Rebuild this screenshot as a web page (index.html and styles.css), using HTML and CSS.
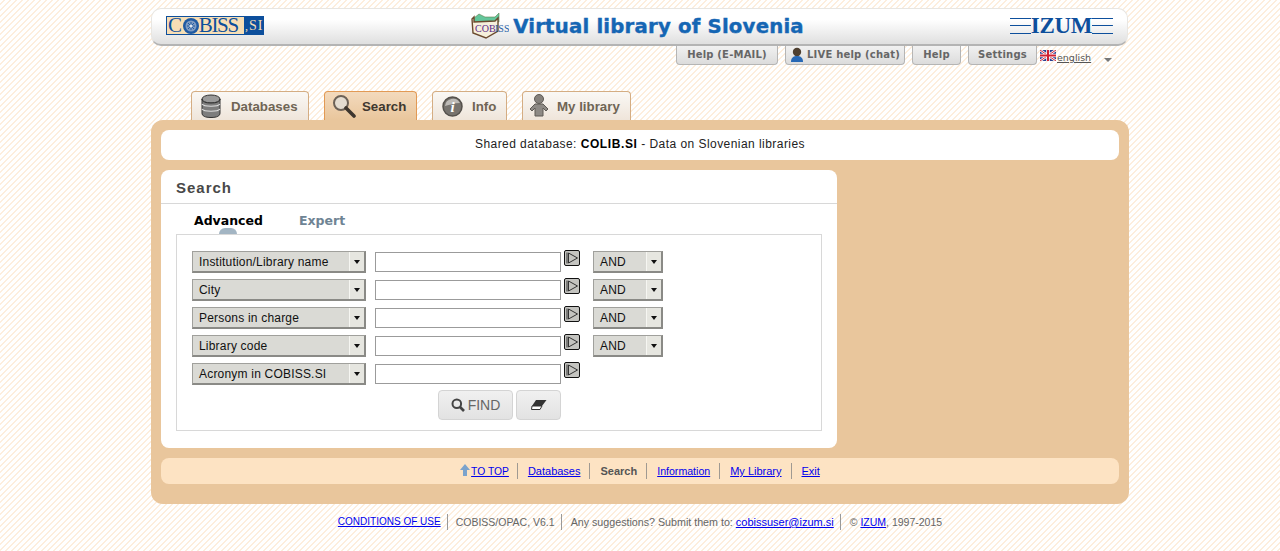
FILE: index.html
```html
<!DOCTYPE html>
<html lang="en">
<head>
<meta charset="utf-8">
<title>COBISS+</title>
<link rel="stylesheet" href="styles.css">
</head>
<body>
<div class="page">
  <header class="header">
    <div class="cobiss-logo"><span class="cl-main">C<svg class="cl-seal" viewBox="0 0 16 16"><circle cx="8" cy="8" r="8" fill="#1f5aa3"/><circle cx="8" cy="8" r="5.500" fill="#7f9bc2"/><path d="M4 8H12M8 4V12M5 5 11 11M11 5 5 11" stroke="#1f5aa3"/><circle cx="8" cy="8" r="1.600" fill="#dfe6ef"/></svg>BISS</span><span class="cl-si"><span class="cl-dot">,</span>SI</span></div>
    <div class="title">
      <svg class="book" width="38" height="26" viewBox="0 0 38 26"><path d="M3 5 8 1 14 4 24 4 28 0V9H3Z" fill="#63c69b" stroke="#5e7f4f" stroke-width=".6"/><path d="M1 6 3 4V9L24 8 27 5V18L15 25 2 20Z" fill="#f6f0dc" stroke="#6b4a2e" stroke-width="1.400"/><text x="4" y="19" class="book-t">COB</text><text x="24" y="19" class="book-s">ISS</text></svg>
      <span class="title-text">Virtual library of Slovenia</span>
    </div>
    <div class="izum"><span class="izum-lines"></span><span class="izum-name">IZUM</span><span class="izum-lines"></span></div>
  </header>

  <nav class="helpbar">
    <a class="hbtn hb1">Help (E-MAIL)</a>
    <a class="hbtn hb2"><svg width="14" height="15" viewBox="0 0 14 15"><circle cx="7" cy="5" r="4.200" fill="#4e3f30"/><path d="M1 15C1 10 4 9 7 9S13 10 13 15Z" fill="#2768b5"/></svg>LIVE help (chat)</a>
    <a class="hbtn hb3">Help</a>
    <a class="hbtn hb4">Settings</a>
    <svg class="flag" width="16" height="11" viewBox="0 0 16 11"><rect width="16" height="11" fill="#2a3f8f"/><path d="M0 0 16 11M16 0 0 11" stroke="#fff" stroke-width="2.400"/><path d="M0 0 16 11M16 0 0 11" stroke="#cf2233" stroke-width="1"/><path d="M8 0V11M0 5.500H16" stroke="#fff" stroke-width="3.600"/><path d="M8 0V11M0 5.500H16" stroke="#cf2233" stroke-width="2"/></svg>
    <a class="lang">english</a>
    <span class="lang-arrow"></span>
  </nav>

  <nav class="tabs">
    <a class="tab t1"><svg width="20" height="24" viewBox="0 0 20 24"><ellipse cx="10" cy="5" rx="9" ry="4" fill="#9a9a9a" stroke="#333"/><path d="M1 5V19C1 22 4 23.500 10 23.500S19 22 19 19V5C19 8 15 9 10 9S1 8 1 5Z" fill="#7d7d7d" stroke="#333"/><path d="M1 10C3 13 17 13 19 10M1 15C3 18 17 18 19 15" fill="none" stroke="#ddd" stroke-width="1.200"/></svg><span>Databases</span></a>
    <a class="tab t2 active"><svg width="24" height="24" viewBox="0 0 24 24"><circle cx="9" cy="9" r="7" fill="#e4dcd0" stroke="#6d6257" stroke-width="2"/><path d="M14 14 22 22" stroke="#3e362e" stroke-width="3.600" stroke-linecap="round"/></svg><span>Search</span></a>
    <a class="tab t3"><svg width="21" height="21" viewBox="0 0 21 21"><circle cx="10.500" cy="10.500" r="9.500" fill="#77736e" stroke="#55514c" stroke-width="1.500"/><path d="M3 10A8 8 0 0 1 18 7C12 7 8 9 3 10Z" fill="#bdbab6"/><text x="10.500" y="16" class="info-i">i</text></svg><span>Info</span></a>
    <a class="tab t4"><svg width="22" height="24" viewBox="0 0 22 24"><circle cx="11" cy="5" r="4.500" fill="#85817c" stroke="#5e5a55"/><path d="M7 10H15L20 15 18 17 15 14V22H7V14L4 17 2 15Z" fill="#8e8a85" stroke="#5e5a55"/></svg><span>My library</span></a>
  </nav>

  <main class="main">
    <div class="shared">Shared database: <b>COLIB.SI</b> - Data on Slovenian libraries</div>

    <section class="panel">
      <h1 class="panel-title">Search</h1>
      <div class="subtabs">
        <a class="subtab current">Advanced</a>
        <a class="subtab">Expert</a>
      </div>
      <div class="formbox">
        <div class="row">
          <div class="sel sel-wide"><span>Institution/Library name</span><i class="sel-btn"></i></div>
          <div class="field"></div>
          <button class="go"><svg width="14" height="14" viewBox="0 0 14 14"><path d="M2 1.500V12.500M3.500 2 12.500 7 3.500 12Z" fill="none" stroke="#333"/></svg></button>
          <div class="sel sel-and"><span>AND</span><i class="sel-btn"></i></div>
        </div>
        <div class="row">
          <div class="sel sel-wide"><span>City</span><i class="sel-btn"></i></div>
          <div class="field"></div>
          <button class="go"><svg width="14" height="14" viewBox="0 0 14 14"><path d="M2 1.500V12.500M3.500 2 12.500 7 3.500 12Z" fill="none" stroke="#333"/></svg></button>
          <div class="sel sel-and"><span>AND</span><i class="sel-btn"></i></div>
        </div>
        <div class="row">
          <div class="sel sel-wide"><span>Persons in charge</span><i class="sel-btn"></i></div>
          <div class="field"></div>
          <button class="go"><svg width="14" height="14" viewBox="0 0 14 14"><path d="M2 1.500V12.500M3.500 2 12.500 7 3.500 12Z" fill="none" stroke="#333"/></svg></button>
          <div class="sel sel-and"><span>AND</span><i class="sel-btn"></i></div>
        </div>
        <div class="row">
          <div class="sel sel-wide"><span>Library code</span><i class="sel-btn"></i></div>
          <div class="field"></div>
          <button class="go"><svg width="14" height="14" viewBox="0 0 14 14"><path d="M2 1.500V12.500M3.500 2 12.500 7 3.500 12Z" fill="none" stroke="#333"/></svg></button>
          <div class="sel sel-and"><span>AND</span><i class="sel-btn"></i></div>
        </div>
        <div class="row">
          <div class="sel sel-wide"><span>Acronym in COBISS.SI</span><i class="sel-btn"></i></div>
          <div class="field"></div>
          <button class="go"><svg width="14" height="14" viewBox="0 0 14 14"><path d="M2 1.500V12.500M3.500 2 12.500 7 3.500 12Z" fill="none" stroke="#333"/></svg></button>
        </div>
        <div class="actions">
          <button class="act act-find"><svg width="14" height="14" viewBox="0 0 14 14"><circle cx="5.800" cy="5.800" r="4.300" fill="none" stroke="#444" stroke-width="2"/><path d="M9 9 13 13" stroke="#444" stroke-width="2.600"/></svg>FIND</button>
          <button class="act act-clear"><svg width="16" height="10" viewBox="0 0 16 10"><path d="M5 0H15.500L11 6H1Z" fill="#333"/><path d="M1 6H11L9 9.500H0.500Z" fill="#fff" stroke="#333"/></svg></button>
        </div>
      </div>
    </section>

    <nav class="footnav">
      <span class="fn fn-top"><svg width="10" height="12" viewBox="0 0 10 12"><path d="M5 0 10 6H7V12H3V6H0Z" fill="#7ba3cc"/></svg><a href="#">TO TOP</a></span>
      <span class="fn"><a href="#">Databases</a></span>
      <span class="fn"><b>Search</b></span>
      <span class="fn fn-info"><a href="#">Information</a></span>
      <span class="fn"><a href="#">My Library</a></span>
      <span class="fn fn-last"><a href="#">Exit</a></span>
    </nav>
  </main>

  <footer class="footer">
    <span class="ft ft-first"><a href="#">CONDITIONS OF USE</a></span>
    <span class="ft">COBISS/OPAC, V6.1</span>
    <span class="ft ft-mid">Any suggestions? Submit them to: <a href="#">cobissuser@izum.si</a></span>
    <span class="ft ft-last">© <a href="#">IZUM</a>, 1997-2015</span>
  </footer>
</div>
</body>
</html>
```
FILE: styles.css
```css
* { box-sizing: border-box; }
html, body { margin: 0; height: 100%; }
body {
  font-family: "Liberation Sans", Arial, sans-serif;
  font-size: 12px;
  color: #000;
  overflow: hidden;
  background: #fff linear-gradient(135deg, #fff 0, #fff 30%, #fdeedd 30%, #fdeedd 50%, #fff 50%, #fff 80%, #fdeedd 80%, #fdeedd 100%) 0 0 / 6px 6px;
}
.page { width: 978px; margin: 0 auto; padding-top: 8px; }

/* header */
.header {
  width: 977px; height: 38px; display: flex; align-items: center; justify-content: space-between;
  padding: 0 14px 2px 14px;
  border-radius: 10px; border: 1px solid #e8e6e2; border-bottom: 2px solid #b4b4b4;
  background: linear-gradient(#fff 0, #fff 30%, #dfdfdf 100%);
}
.cobiss-logo {
  width: 98px; height: 19px; display: flex; align-items: center; justify-content: space-between;
  background: #f7deb5; border: 1px solid #0d4f9c;
  font-family: "Liberation Serif", serif; color: #0d4f9c; font-size: 21px; line-height: 17px;
  white-space: nowrap;
}
.cl-main { display: flex; align-items: center; letter-spacing: -1.300px; padding-left: 1px; }
.cl-seal { width: 16px; height: 16px; margin: 0 0 0 2px; flex: none; }
.cl-si { background: #0d4f9c; color: #f7deb5; font-size: 14px; width: 19px; height: 17px; line-height: 17px; text-align: left; letter-spacing: 1px; white-space: nowrap; }
.cl-dot { padding: 0 1px 0 1px; font-size: 12px; letter-spacing: 0; }
.title { display: flex; align-items: center; gap: 4px; margin: 1px 0 0 1px; }
.book { flex: none; }
.book-t, .book-s { font-family: "Liberation Serif", serif; font-size: 10px; }
.book-t { fill: #5b2a8a; }
.book-s { fill: #1f5fa8; }
.title-text {
  font-family: "DejaVu Sans", sans-serif; font-weight: 700; font-size: 19.700px; color: #1566b4;
  letter-spacing: 0.200px; white-space: nowrap; -webkit-text-stroke: 0.400px #1566b4;
}
.izum { display: flex; align-items: center; width: 103px; }
.izum-lines { flex: 1; height: 16px; border-top: 1px solid #0d4f9c; border-bottom: 1px solid #0d4f9c;
  background: linear-gradient(#0d4f9c, #0d4f9c) center / 100% 1px no-repeat; }
.izum-name { font-family: "Liberation Serif", serif; font-weight: 700; font-size: 23px; color: #0d4f9c; line-height: 20px; letter-spacing: -0.300px; }

/* help bar */
.helpbar { height: 45px; display: flex; align-items: flex-start; padding-left: 525px; }
.hbtn {
  height: 19px; display: flex; align-items: center; justify-content: center; gap: 3px; padding-bottom: 1px;
  font-family: "DejaVu Sans", sans-serif; font-weight: 700; font-size: 10px; color: #666; letter-spacing: 0.200px;
  background: linear-gradient(#f1f1f1, #dcdcdc);
  border: 1px solid #b5b5b5; border-top: 0; border-radius: 0 0 4px 4px; white-space: nowrap; margin-right: 7px;
}
.hb1 { width: 102px; }
.hb2 { width: 120px; }
.hb3 { width: 49px; }
.hb4 { width: 69px; margin-right: 3px; }
.flag { margin-top: 4px; flex: none; }
.lang { font-family: "DejaVu Sans", sans-serif; font-size: 9.500px; color: #555; text-decoration: underline; margin: 6px 0 0 1px; width: 35px; white-space: nowrap; }
.lang-arrow { width: 0; height: 0; margin: 12px 0 0 12px; border: 4px solid transparent; border-top: 4px solid #777; border-bottom: 0; }

/* tabs */
.tabs { height: 29px; display: flex; gap: 15px; padding-left: 40px; align-items: flex-end; }
.tab {
  height: 29px; display: flex; align-items: center; overflow: hidden;
  border: 1px solid #d4ad83; border-bottom: 0; border-radius: 4px 4px 0 0;
  background: linear-gradient(#faf8f5, #efe5da);
  font-weight: 700; font-size: 13.300px; color: #6f6555;
}
.tab svg { flex: none; }
.info-i { font-family: "Liberation Serif", serif; font-style: italic; font-weight: 700; font-size: 15px; fill: #fff; text-anchor: middle; }
.t1 { width: 118px; padding-left: 9px; gap: 10px; }
.t2 { width: 93px; padding-left: 7px; gap: 6px; }
.t3 { width: 75px; padding-left: 9px; gap: 9px; }
.t4 { width: 109px; padding-left: 5px; gap: 7px; }
.active { background: linear-gradient(#f3dabd, #e9c69c); border-color: #e29a55; color: #40382f; }

/* main */
.main { width: 978px; height: 384px; background: #e9c69c; border-radius: 12px; padding: 10px; }
.shared {
  width: 958px; height: 30px; background: #fff; border-radius: 8px;
  line-height: 29px; text-align: center; white-space: nowrap;
  font-size: 12px; letter-spacing: 0.450px; color: #222;
}
.shared b { color: #000; letter-spacing: 0.600px; }
.panel { width: 676px; height: 278px; margin-top: 10px; background: #fff; border-radius: 8px; }
.panel-title {
  margin: 0; height: 34px; padding: 9px 0 0 15px; border-bottom: 1px solid #d8d8d8;
  font-family: "Liberation Sans", sans-serif; font-weight: 700; font-size: 15px; line-height: 18px; color: #484848; letter-spacing: 1px;
}
.subtabs { height: 30px; display: flex; gap: 36px; padding: 8px 0 0 33px; }
.subtab { font-family: "DejaVu Sans", sans-serif; font-weight: 700; font-size: 12.500px; line-height: 18px; color: #6f8494; height: 22px; position: relative; }
.current { color: #000; }
.current::after {
  content: ""; position: absolute; left: 25px; top: 16px; width: 18px; height: 6px;
  background: #a3b5c3; border-radius: 9px 9px 0 0;
}
.formbox { margin: 0 15px; width: 646px; height: 197px; border: 1px solid #d8d8d8; padding: 16px 15px 0; }
.row { display: flex; height: 28px; align-items: flex-start; }
.sel {
  height: 22px; display: flex; align-items: stretch; justify-content: space-between;
  background: #dadad5; border: 1px solid #a0a09c; border-right: 2px solid #8a8a86; border-bottom: 2px solid #8a8a86;
  font-size: 12px; line-height: 20px; color: #111; letter-spacing: 0.200px;
}
.sel span { padding-left: 6px; white-space: nowrap; }
.sel-wide { width: 174px; }
.sel-and { width: 70px; margin-left: 13px; }
.sel-btn {
  width: 15px; background: #e6e6e0; border-left: 1px solid #f6f6f2;
  display: flex; align-items: center; justify-content: center;
}
.sel-btn::after { content: ""; border: 3.500px solid transparent; border-top: 4px solid #111; border-bottom: 0; }
.field { width: 186px; height: 20px; margin: 1px 0 0 9px; background: #fff; border: 1px solid #9b9b9b; }
.go {
  width: 16px; height: 16px; margin: -1px 0 0 3px; padding: 0; display: flex; align-items: center; justify-content: center;
  background: #c4c4c0; border: 1px solid #111; border-radius: 2px;
}
.actions { display: flex; gap: 3px; padding-left: 246px; margin-top: -1px; }
.act {
  height: 30px; display: flex; align-items: center; justify-content: center; gap: 3px; padding: 0;
  background: linear-gradient(#f0f0f0, #e2e2e2); border: 1px solid #d4d4d4; border-radius: 4px;
  font-family: "Liberation Sans", sans-serif; font-size: 14px; color: #666;
}
.act-find { width: 75px; }
.act-clear { width: 45px; }

/* footer nav */
.footnav {
  width: 958px; height: 26px; margin-top: 10px; background: #fde3c3; border-radius: 8px;
  display: flex; align-items: center; justify-content: center; font-size: 11px;
}
.footnav a { color: #00e; }
.fn { display: flex; align-items: center; height: 16px; padding: 0 9px 0 10px; border-right: 1px solid #a09a92; }
.fn b { color: #555; }
.fn-top { padding-right: 8px; padding-left: 0; font-size: 10.300px; }
.fn-top svg { margin-bottom: 3px; margin-right: 1px; }
.fn-info { font-size: 10.600px; }
.fn-last { border-right: 0; padding-right: 0; }

/* page footer */
.footer { width: 978px; height: 16px; margin-top: 10px; display: flex; justify-content: center; font-size: 10.500px; color: #666; }
.footer a { color: #00e; }
.ft { height: 16px; line-height: 16px; padding: 0 6px 0 8px; border-right: 1px solid #999; white-space: nowrap; }
.ft-first { padding-left: 0; font-size: 10px; }
.ft-mid { padding-left: 9px; font-size: 10.700px; }
.ft-mid a { font-size: 11px; }
.ft-last { border-right: 0; padding-left: 9px; padding-right: 0; }
```
